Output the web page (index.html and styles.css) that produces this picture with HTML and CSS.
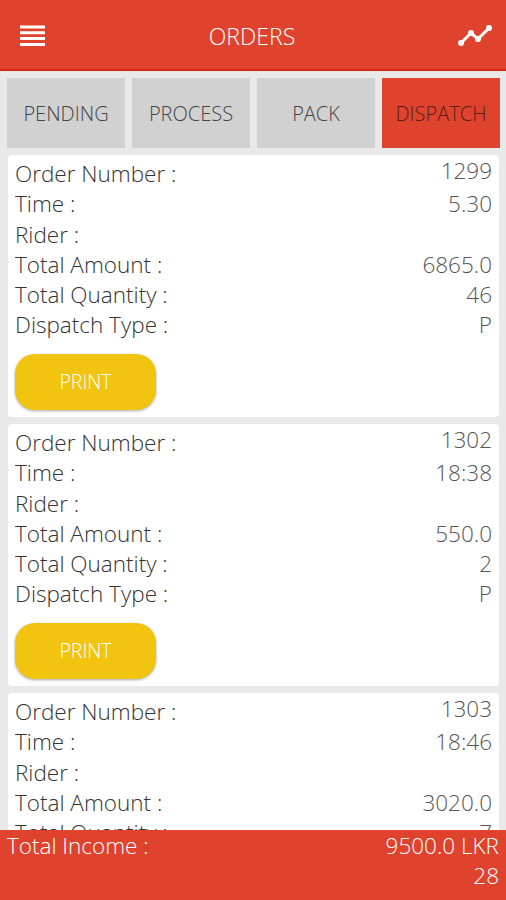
FILE: index.html
```html
<!DOCTYPE html>
<html lang="en"><head><meta charset="utf-8"><title>Orders</title><link rel="stylesheet" href="styles.css"></head>
<body>
<header class="bar">
<svg class="menu" width="26" height="22" viewBox="0 0 26 22"><path d="M0 2h25M0 7.8h25M0 13.6h25M0 19.4h25" stroke="#fff" stroke-width="3"/></svg>
<h1>ORDERS</h1>
<svg class="trend" width="34" height="22" viewBox="0 0 34 22"><path d="M3 18L13 8L20 14L31 3" fill="none" stroke="#fff" stroke-width="3"/><g fill="#fff"><circle cx="3" cy="18" r="3"/><circle cx="13" cy="8" r="3"/><circle cx="20" cy="14" r="3"/><circle cx="31" cy="3" r="3"/></g></svg>
</header>
<nav class="tabs"><button>PENDING</button><button>PROCESS</button><button>PACK</button><button class="active">DISPATCH</button></nav>
<main class="list">
<section class="card"><dl><dt>Order Number :</dt><dd class="num">1299</dd><dt>Time :</dt><dd>5.30</dd><dt>Rider :</dt><dd></dd><dt>Total Amount :</dt><dd>6865.0</dd><dt>Total Quantity :</dt><dd>46</dd><dt>Dispatch Type :</dt><dd>P</dd></dl><button class="print">PRINT</button></section>
<section class="card"><dl><dt>Order Number :</dt><dd class="num">1302</dd><dt>Time :</dt><dd>18:38</dd><dt>Rider :</dt><dd></dd><dt>Total Amount :</dt><dd>550.0</dd><dt>Total Quantity :</dt><dd>2</dd><dt>Dispatch Type :</dt><dd>P</dd></dl><button class="print">PRINT</button></section>
<section class="card"><dl><dt>Order Number :</dt><dd class="num">1303</dd><dt>Time :</dt><dd>18:46</dd><dt>Rider :</dt><dd></dd><dt>Total Amount :</dt><dd>3020.0</dd><dt>Total Quantity :</dt><dd>7</dd></dl></section>
</main>
<footer class="total"><span>Total Income :</span><div>9500.0 LKR<br>28</div></footer>
</body></html>
```
FILE: styles.css
```css
* { box-sizing: border-box; }
body { margin: 0; height: 900px; display: flex; flex-direction: column; overflow: hidden; background: #e9e9e9; font-family: "Open Sans", sans-serif; font-weight: 300; color: #333; }
button { font: inherit; border: 0; padding: 0; }
.bar { height: 71px; flex: none; background: #df432d; border-bottom: 2px solid #d8230f; display: flex; align-items: center; justify-content: space-between; padding: 2px 14px 0 20px; color: #fff; }
h1 { margin: 0; font-size: 23px; font-weight: 300; }
.tabs { flex: none; display: grid; grid-template-columns: repeat(4, 118px); gap: 7px; padding: 7px 7px 0; }
.tabs button { height: 70px; background: #d1d1d1; color: #444; font-size: 20px; }
.tabs .active { background: #df432d; color: #5a1c14; }
.list { flex: 1; min-height: 0; overflow: hidden; padding: 7px 7px 0 8px; display: flex; flex-direction: column; gap: 7px; }
.card { flex: none; height: 262px; background: #fff; border-radius: 4px; padding: 4px 7px 0; }
dl { margin: 0; display: grid; grid-template-columns: 1fr auto; grid-auto-rows: 30.3px; font-size: 22.5px; line-height: 30.3px; }
dd { margin: 0; text-align: right; color: #555; }
.num { margin-top: -3px; }
.print { display: block; margin-top: 13px; width: 141px; height: 56px; border-radius: 20px; background: #f1c40f; color: #fff; font-size: 19.5px; box-shadow: 0 1px 3px #0005; }
.total { flex: none; height: 70px; background: #df432d; color: #fff; display: flex; justify-content: space-between; padding: 1px 7px 0; font-size: 22.5px; line-height: 30.3px; text-align: right; }
```
